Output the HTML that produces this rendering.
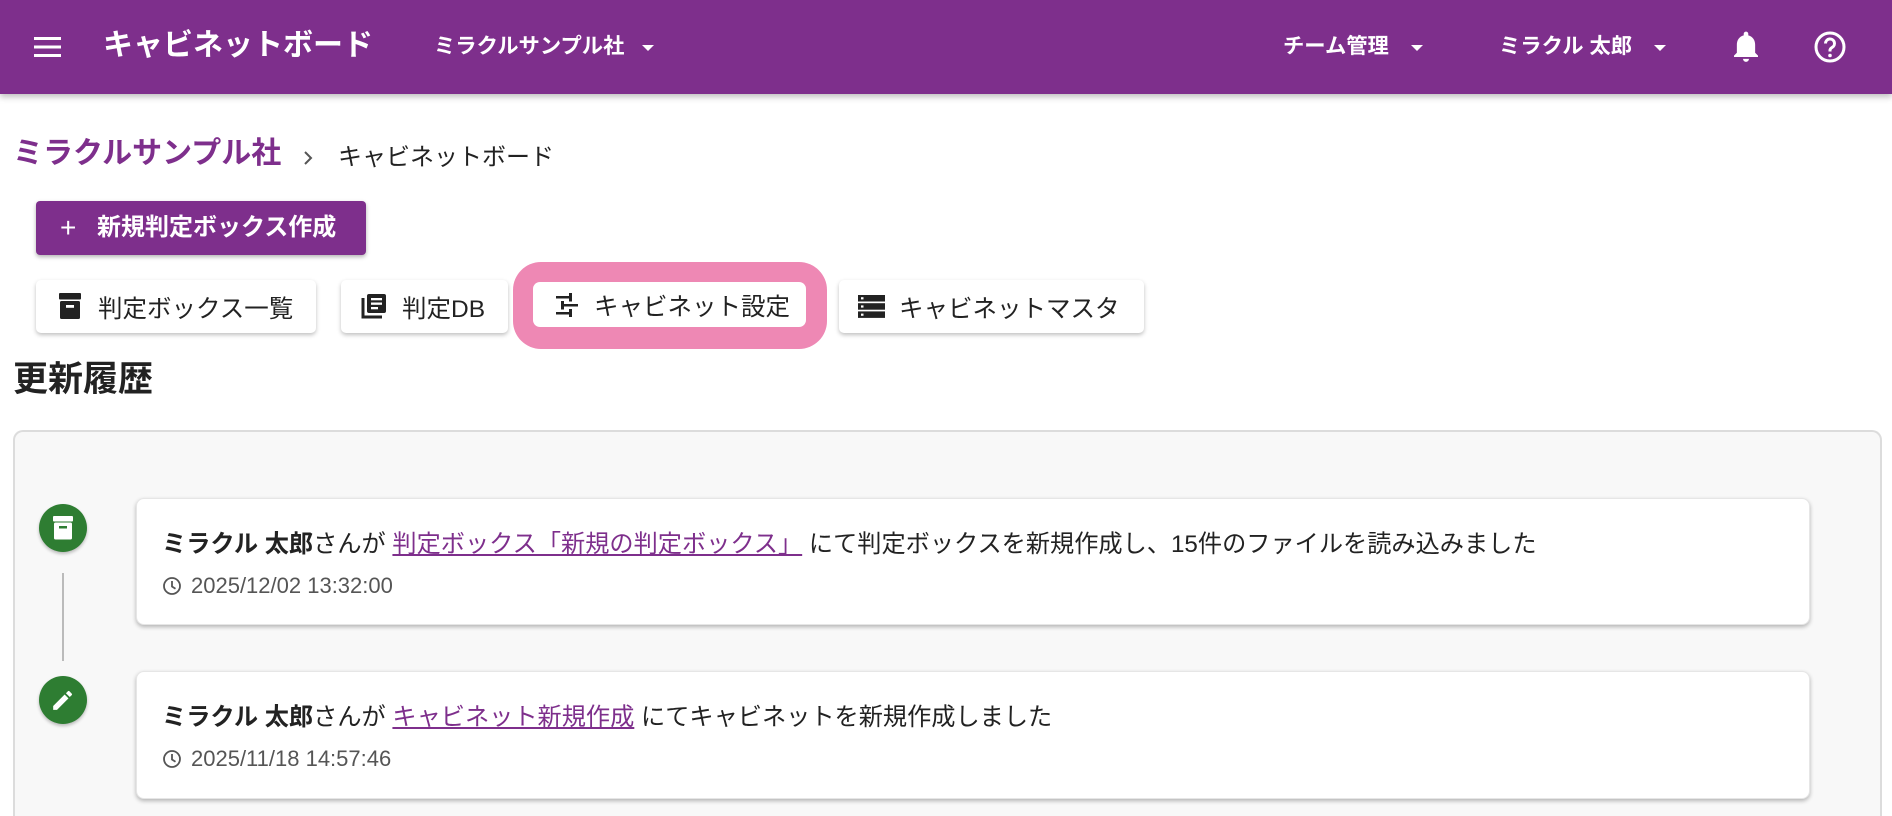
<!DOCTYPE html>
<html><head><meta charset="utf-8">
<style>
*{box-sizing:border-box;margin:0;padding:0}
html,body{width:1892px;height:816px;overflow:hidden}
body{background:#fff;font-family:"Liberation Sans","Noto Sans CJK JP",sans-serif;color:#222;position:relative}
.abs{position:absolute;white-space:nowrap}
.hdr{position:absolute;left:0;top:0;width:1892px;height:94px;background:#7e2f8c;box-shadow:0 3px 6px rgba(0,0,0,.25);color:#fff}
.tri{display:inline-block;width:0;height:0;border-left:6px solid transparent;border-right:6px solid transparent;border-top:6px solid #fff}
.btn{position:absolute;top:280px;height:53px;background:#fff;border-radius:5px;box-shadow:0 2px 4px rgba(0,0,0,.25);font-size:24.5px;color:#222}
.btn .t{position:absolute;top:10px}
.card{position:absolute;left:136px;width:1674px;background:#fff;border-radius:8px;box-shadow:0 2px 4px rgba(0,0,0,.28);border:1px solid #e6e6e6}
.card .l1{position:absolute;left:25px;top:25px;font-size:24.2px;white-space:nowrap}
.card .l2{position:absolute;left:25px;top:74px;font-size:22px;color:#555;white-space:nowrap}
a{color:#7e2f8c;text-decoration:underline}
.dot{position:absolute;left:39px;width:48px;height:48px;border-radius:50%;background:#2e7d32;box-shadow:0 2px 3px rgba(0,0,0,.25)}
</style></head><body>
<div class="hdr">
 <svg class="abs" style="left:34px;top:36px" width="27" height="22" viewBox="0 0 27 22"><rect y="1" width="27" height="3" fill="#fff"/><rect y="9.5" width="27" height="3" fill="#fff"/><rect y="18" width="27" height="3" fill="#fff"/></svg>
 <div class="abs" style="left:103px;top:26px;font-size:30px;font-weight:bold;line-height:40px">キャビネットボード</div>
 <div class="abs" style="left:434px;top:32px;font-size:21.3px;font-weight:bold;line-height:28px">ミラクルサンプル社</div>
 <span class="tri abs" style="left:642px;top:45px"></span>
 <div class="abs" style="left:1283px;top:32px;font-size:21.3px;font-weight:bold;line-height:28px">チーム管理</div>
 <span class="tri abs" style="left:1411px;top:45px"></span>
 <div class="abs" style="left:1499px;top:32px;font-size:21.3px;font-weight:bold;line-height:28px">ミラクル 太郎</div>
 <span class="tri abs" style="left:1654px;top:45px"></span>
 <svg class="abs" style="left:1732px;top:31px" width="28" height="32" viewBox="0 0 24 28"><path d="M12 27a2.6 2.6 0 0 0 2.6-2.6h-5.2A2.6 2.6 0 0 0 12 27zM20 19v-7c0-4-2.2-7.3-6-8.2V2.5a2 2 0 0 0-4 0v1.3C6.2 4.7 4 8 4 12v7l-2.5 2.5v1.3h21v-1.3z" fill="#fff"/></svg>
 <svg class="abs" style="left:1813px;top:30px" width="34" height="34" viewBox="0 0 34 34"><circle cx="17" cy="17" r="14" fill="none" stroke="#fff" stroke-width="3"/><path d="M12.5 13.5a4.5 4.5 0 1 1 6.5 4c-1.4.8-2 1.6-2 3v1" fill="none" stroke="#fff" stroke-width="3"/><circle cx="17" cy="25.5" r="1.8" fill="#fff"/></svg>
</div>

<div class="abs" style="left:13px;top:135px;font-size:30px;font-weight:bold;color:#7e2f8c;line-height:38px">ミラクルサンプル社</div>
<svg class="abs" style="left:303px;top:151px" width="10" height="14" viewBox="0 0 10 14"><path d="M2 1l6 6-6 6" fill="none" stroke="#555" stroke-width="2"/></svg>
<div class="abs" style="left:338px;top:142px;font-size:24px;line-height:32px">キャビネットボード</div>

<div class="abs" style="left:36px;top:201px;width:330px;height:54px;background:#7e2f8c;border-radius:4px;box-shadow:0 2px 4px rgba(0,0,0,.3)"></div>
<div class="abs" style="left:60px;top:213px;font-size:28px;color:#fff;line-height:30px">+</div>
<div class="abs" style="left:97px;top:212px;font-size:24px;font-weight:bold;color:#fff;line-height:32px">新規判定ボックス作成</div>

<div class="btn" style="left:36px;width:280px">
 <svg class="abs" style="left:23px;top:13px" width="22" height="27" viewBox="0 0 22 27"><rect x="0" y="0" width="22" height="6.5" rx="1" fill="#222"/><rect x="1" y="8" width="20" height="18" rx="1.5" fill="#222"/><rect x="7" y="12" width="8" height="2.8" fill="#fff"/></svg>
 <span class="t" style="left:62px">判定ボックス一覧</span>
</div>
<div class="btn" style="left:341px;width:167px">
 <svg class="abs" style="left:20px;top:13px" width="26" height="26" viewBox="0 0 26 26"><path d="M2 5v19h19" fill="none" stroke="#222" stroke-width="3"/><rect x="6" y="1" width="19" height="19" rx="2" fill="#222"/><rect x="10" y="5" width="11" height="2.3" fill="#fff"/><rect x="10" y="9.5" width="11" height="2.3" fill="#fff"/><rect x="10" y="14" width="7" height="2.3" fill="#fff"/></svg>
 <span class="t" style="left:61px">判定DB</span>
</div>
<div class="abs" style="left:513px;top:262px;width:314px;height:87px;background:#ee88b4;border-radius:28px"></div>
<div class="btn" style="left:533px;top:282px;width:273px;height:45px;box-shadow:none;border-radius:7px">
 <svg class="abs" style="left:21px;top:11px" width="26" height="24" viewBox="0 0 26 24"><g fill="#222"><rect x="2" y="3" width="22" height="2.5"/><rect x="2" y="11" width="22" height="2.5"/><rect x="2" y="19" width="22" height="2.5"/><rect x="15" y="0" width="3" height="8.5"/><rect x="7" y="8" width="3" height="8.5"/><rect x="15" y="16" width="3" height="8"/></g><rect x="18" y="2.5" width="6" height="3.5" fill="#fff"/><rect x="2" y="10.5" width="5" height="3.5" fill="#fff"/><rect x="18" y="18.5" width="6" height="3.5" fill="#fff"/></svg>
 <span class="t" style="left:61px;top:6px">キャビネット設定</span>
</div>
<div class="btn" style="left:839px;width:305px">
 <svg class="abs" style="left:19px;top:15px" width="27" height="23" viewBox="0 0 27 23"><g fill="#222"><rect y="0" width="27" height="6.5"/><rect y="8.2" width="27" height="6.5"/><rect y="16.4" width="27" height="6.5"/></g><g fill="#fff"><rect x="3" y="2.2" width="2.5" height="2.2"/><rect x="3" y="10.4" width="2.5" height="2.2"/><rect x="3" y="18.6" width="2.5" height="2.2"/></g></svg>
 <span class="t" style="left:60px">キャビネットマスタ</span>
</div>

<div class="abs" style="left:13px;top:358px;font-size:35px;font-weight:bold;line-height:44px">更新履歴</div>

<div class="abs" style="left:13px;top:430px;width:1869px;height:400px;background:#f8f8f8;border:2px solid #dcdcdc;border-bottom:none;border-radius:10px 10px 0 0"></div>

<div class="abs" style="left:62px;top:573px;width:2px;height:88px;background:#bbb"></div>
<div class="dot" style="top:504px">
 <svg class="abs" style="left:13px;top:11px" width="22" height="26" viewBox="0 0 22 26"><rect x="1" y="1" width="20" height="5.5" rx="1" fill="#fff"/><rect x="2" y="7.5" width="18" height="17" rx="1.5" fill="#fff"/><rect x="7" y="11" width="8" height="2.5" fill="#2e7d32"/></svg>
</div>
<div class="dot" style="top:676px">
 <svg class="abs" style="left:12px;top:12px" width="24" height="24" viewBox="0 0 22 22"><path d="M2 16.5V20h3.5L16 9.5 12.5 6zM19 6.5a1 1 0 0 0 0-1.4L16.9 3a1 1 0 0 0-1.4 0l-1.8 1.8 3.5 3.5z" fill="#fff"/></svg>
</div>

<div class="card" style="top:498px;height:127px">
 <div class="l1"><b>ミラクル 太郎</b>さんが <a>判定ボックス「新規の判定ボックス」</a> にて判定ボックスを新規作成し、15件のファイルを読み込みました</div>
 <div class="l2"><svg style="vertical-align:-3px;margin-right:9px" width="20" height="20" viewBox="0 0 20 20"><circle cx="10" cy="10" r="8" fill="none" stroke="#555" stroke-width="1.8"/><path d="M10 5v5.5l3.5 2.2" fill="none" stroke="#555" stroke-width="1.8"/></svg>2025/12/02 13:32:00</div>
</div>
<div class="card" style="top:671px;height:128px">
 <div class="l1"><b>ミラクル 太郎</b>さんが <a>キャビネット新規作成</a> にてキャビネットを新規作成しました</div>
 <div class="l2"><svg style="vertical-align:-3px;margin-right:9px" width="20" height="20" viewBox="0 0 20 20"><circle cx="10" cy="10" r="8" fill="none" stroke="#555" stroke-width="1.8"/><path d="M10 5v5.5l3.5 2.2" fill="none" stroke="#555" stroke-width="1.8"/></svg>2025/11/18 14:57:46</div>
</div>
</body></html>
